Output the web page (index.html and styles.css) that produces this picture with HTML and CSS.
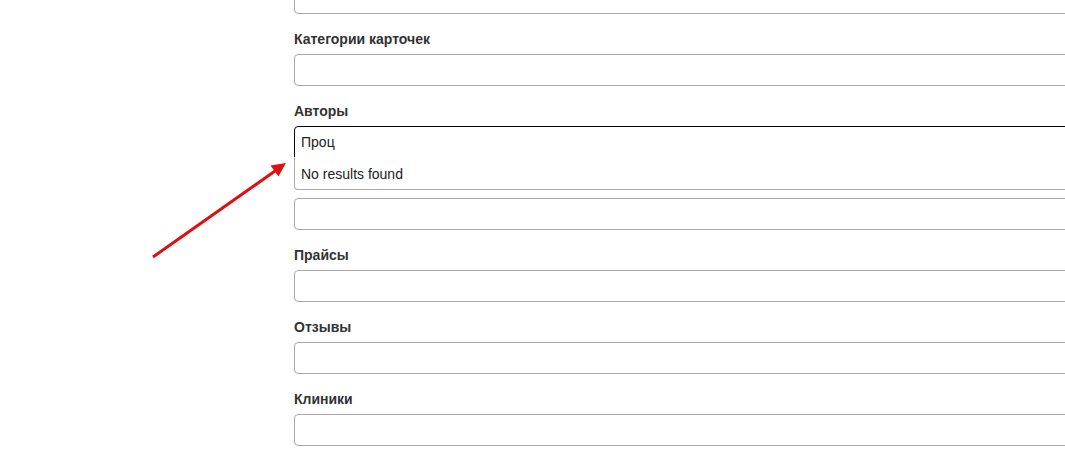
FILE: index.html
```html
<!DOCTYPE html>
<html lang="ru">
<head>
<meta charset="utf-8">
<title>Form</title>
<link rel="stylesheet" href="styles.css">
</head>
<body>
<div class="page">
  <form class="form">
    <div class="field field-first">
      <div class="box"></div>
    </div>
    <div class="field">
      <label class="label">Категории карточек</label>
      <div class="box"></div>
    </div>
    <div class="field field-open">
      <label class="label">Авторы</label>
      <div class="box box-focus"><span class="search">Проц</span></div>
      <div class="dropdown"><div class="option">No results found</div></div>
    </div>
    <div class="field">
      <label class="label label-covered">Статьи</label>
      <div class="box"></div>
    </div>
    <div class="field">
      <label class="label">Прайсы</label>
      <div class="box"></div>
    </div>
    <div class="field">
      <label class="label">Отзывы</label>
      <div class="box"></div>
    </div>
    <div class="field">
      <label class="label">Клиники</label>
      <div class="box"></div>
    </div>
  </form>
  <svg class="arrow" width="160" height="120" viewBox="0 0 160 120">
    <line x1="13" y1="107" x2="135" y2="21" stroke="#dd1111" stroke-width="3"/>
    <polygon points="146,13 138.5,26.5 130.5,15.5" fill="#dd1111"/>
  </svg>
</div>
</body>
</html>
```

FILE: styles.css
```css
html, body {
  margin: 0;
  padding: 0;
  background: #fff;
  overflow: hidden;
}
body {
  font-family: "Liberation Sans", Arial, sans-serif;
  color: #333;
}
.page {
  position: relative;
  width: 1065px;
  height: 469px;
  overflow: hidden;
}
.form {
  margin-top: -18px;
  padding-left: 294px;
  width: 900px;
  display: flex;
  flex-direction: column;
  gap: 14px;
}
.field {
  position: relative;
  display: flex;
  flex-direction: column;
}
.label {
  font-size: 14px;
  font-weight: bold;
  line-height: 20px;
  padding-top: 1px;
  margin-bottom: 5px;
  color: #333;
}
.label-covered {
  visibility: hidden;
}
.box {
  height: 32px;
  box-sizing: border-box;
  border: 1px solid #aaa;
  border-radius: 4px;
  background: #fff;
  display: flex;
  align-items: center;
}
.box-focus {
  border-color: #000;
  border-radius: 4px 4px 0 0;
}
.search {
  padding-left: 6px;
  font-size: 14px;
  color: #222;
}
.dropdown {
  position: absolute;
  left: 0;
  right: 0;
  top: 100%;
  margin-top: -1px;
  box-sizing: border-box;
  border: 1px solid #aaa;
  border-top: none;
  border-radius: 0 0 4px 4px;
  background: #fff;
  z-index: 2;
}
.option {
  padding: 7px 6px 5px;
  font-size: 14px;
  line-height: 20px;
  color: #222;
}
.arrow {
  position: absolute;
  left: 140px;
  top: 150px;
}
```
